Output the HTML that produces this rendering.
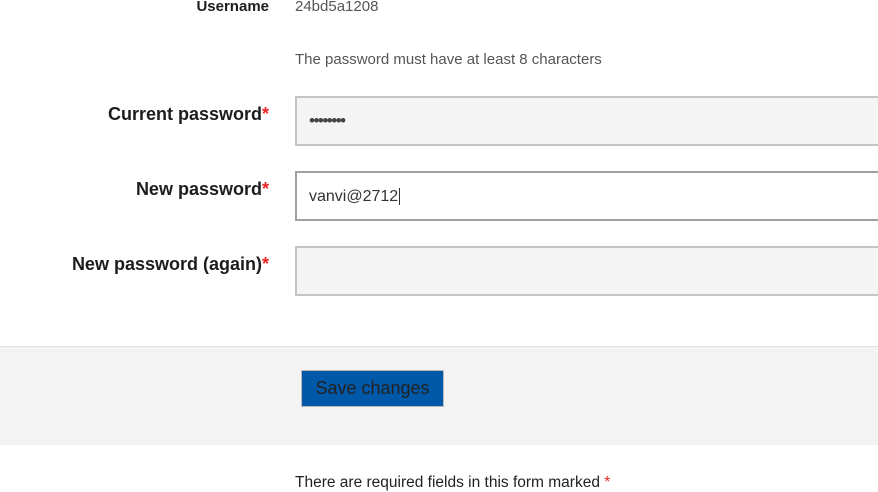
<!DOCTYPE html><html><head><style>
body{margin:0;width:878px;height:480px;overflow:hidden;background:#fff;font-family:"Liberation Sans",sans-serif;position:relative}
.a{position:absolute}
.lbl{right:609px;font-weight:bold;font-size:18px;color:#1d1d1d;white-space:nowrap}
.lbl span{color:#e22;}
.inp{left:295px;width:600px;height:46px;border:2px solid #c4c4c4;background:#f4f4f4;box-sizing:content-box}
</style></head><body>
<div class="a lbl" style="top:-2px;font-size:15px">Username</div>
<div class="a" style="left:295px;top:-2px;font-size:15px;color:#555">24bd5a1208</div>
<div class="a" style="left:295px;top:51px;font-size:15px;color:#555">The password must have at least 8 characters</div>
<div class="a lbl" style="top:104px">Current password<span>*</span></div>
<div class="a inp" style="top:96px"><div style="position:absolute;left:12px;top:13px;font-size:17px;color:#444;letter-spacing:-1.5px">••••••••</div></div>
<div class="a lbl" style="top:179px">New password<span>*</span></div>
<div class="a inp" style="top:171px;background:#fff;border-color:#a0a0a0"><div style="position:absolute;left:12px;top:15px;font-size:16px;color:#333">vanvi@2712<span style="border-left:1px solid #333;margin-left:1px"></span></div></div>
<div class="a lbl" style="top:254px">New password (again)<span>*</span></div>
<div class="a inp" style="top:246px"></div>
<div class="a" style="left:0;top:346px;width:878px;height:98px;background:#f3f3f3;border-top:1px solid #e3e3e3"></div>
<div class="a" style="left:301px;top:370px;width:141px;height:35px;background:#0059a8;border:1px solid #bbb;font-size:18px;color:#222;text-align:center;line-height:35px">Save changes</div>
<div class="a" style="left:295px;top:474px;font-size:15.5px;color:#222">There are required fields in this form marked <span style="color:#e22">*</span></div>
</body></html>
